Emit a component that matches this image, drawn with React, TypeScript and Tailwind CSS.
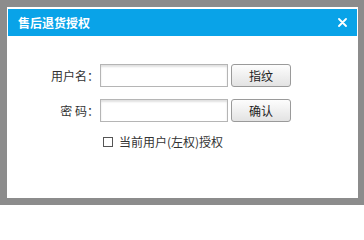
import React from "react";

export default function App() {
  const font = { fontFamily: '"Noto Sans CJK SC", "Noto Sans", sans-serif' };
  return (
    <div className="w-[364px] h-[205px] bg-[#8c8c8c] pt-[7px] pl-[7px] overflow-hidden" style={font}>
      <div className="w-[351px] h-[191px] bg-white px-px pt-[2px] flex flex-col">
        <div className="h-[27px] bg-[#09a3e8] flex items-center justify-between pl-[10px] pr-[10px]">
          <span className="text-white font-bold text-[12px] leading-none">售后退货授权</span>
          <svg width="9" height="9" viewBox="0 0 9 9" className="text-white">
            <path d="M1 1 L8 8 M8 1 L1 8" stroke="currentColor" strokeWidth="1.8" strokeLinecap="round" />
          </svg>
        </div>
        <div className="flex flex-col pt-[28px] text-[12px] text-[#333]">
          <div className="flex items-center h-[23px]">
            <div className="w-[92px] text-right leading-none pr-[1px]">用户名：</div>
            <div className="w-[128px] h-[23px] border border-[#b5b5b5] shadow-[inset_0_2px_2px_rgba(0,0,0,0.12)]" />
            <button className="ml-[3px] w-[60px] h-[23px] border border-[#9a9a9a] rounded-[3px] bg-gradient-to-b from-[#fdfdfd] to-[#e3e3e3] text-[12px] text-[#222] leading-none">指纹</button>
          </div>
          <div className="flex items-center h-[23px] mt-[12px]">
            <div className="w-[92px] text-right leading-none pr-[1px]">密 码：</div>
            <div className="w-[128px] h-[23px] border border-[#b5b5b5] shadow-[inset_0_2px_2px_rgba(0,0,0,0.12)]" />
            <button className="ml-[3px] w-[60px] h-[23px] border border-[#9a9a9a] rounded-[3px] bg-gradient-to-b from-[#fdfdfd] to-[#e3e3e3] text-[12px] text-[#222] leading-none">确认</button>
          </div>
          <div className="flex items-center mt-[14px] pl-[95px]">
            <div className="w-[10px] h-[10px] border border-[#555] bg-white" />
            <span className="ml-[6px] leading-none">当前用户(左权)授权</span>
          </div>
        </div>
      </div>
    </div>
  );
}
